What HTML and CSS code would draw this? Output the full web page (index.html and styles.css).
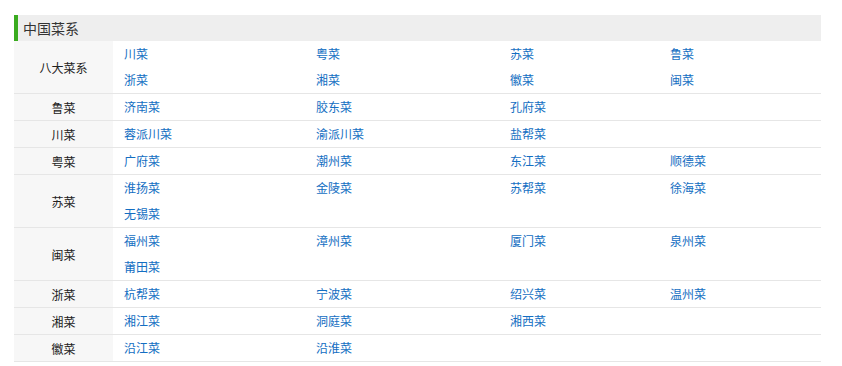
FILE: index.html
```html
<!DOCTYPE html>
<html lang="zh-CN">
<head>
<meta charset="utf-8">
<title>中国菜系</title>
<link rel="stylesheet" href="styles.css">
</head>
<body>
<div class="nav">
  <div class="nav-title">中国菜系</div>
  <div class="row">
    <div class="label">八大菜系</div>
    <div class="items">
      <a href="#">川菜</a><a href="#">粤菜</a><a href="#">苏菜</a><a href="#">鲁菜</a>
      <a href="#">浙菜</a><a href="#">湘菜</a><a href="#">徽菜</a><a href="#">闽菜</a>
    </div>
  </div>
  <div class="row">
    <div class="label">鲁菜</div>
    <div class="items"><a href="#">济南菜</a><a href="#">胶东菜</a><a href="#">孔府菜</a></div>
  </div>
  <div class="row">
    <div class="label">川菜</div>
    <div class="items"><a href="#">蓉派川菜</a><a href="#">渝派川菜</a><a href="#">盐帮菜</a></div>
  </div>
  <div class="row">
    <div class="label">粤菜</div>
    <div class="items"><a href="#">广府菜</a><a href="#">潮州菜</a><a href="#">东江菜</a><a href="#">顺德菜</a></div>
  </div>
  <div class="row">
    <div class="label">苏菜</div>
    <div class="items"><a href="#">淮扬菜</a><a href="#">金陵菜</a><a href="#">苏帮菜</a><a href="#">徐海菜</a><a href="#">无锡菜</a></div>
  </div>
  <div class="row">
    <div class="label">闽菜</div>
    <div class="items"><a href="#">福州菜</a><a href="#">漳州菜</a><a href="#">厦门菜</a><a href="#">泉州菜</a><a href="#">莆田菜</a></div>
  </div>
  <div class="row">
    <div class="label">浙菜</div>
    <div class="items"><a href="#">杭帮菜</a><a href="#">宁波菜</a><a href="#">绍兴菜</a><a href="#">温州菜</a></div>
  </div>
  <div class="row">
    <div class="label">湘菜</div>
    <div class="items"><a href="#">湘江菜</a><a href="#">洞庭菜</a><a href="#">湘西菜</a></div>
  </div>
  <div class="row">
    <div class="label">徽菜</div>
    <div class="items"><a href="#">沿江菜</a><a href="#">沿淮菜</a></div>
  </div>
</div>
</body>
</html>
```
FILE: styles.css
```css
html, body {
  margin: 0;
  padding: 0;
  background: #fff;
}
body {
  padding: 15px 21px 0 14px;
  font-family: "Noto Sans CJK SC", "Microsoft YaHei", sans-serif;
  font-size: 12px;
  color: #333;
}
.nav {
  width: 807px;
}
.nav-title {
  height: 26px;
  line-height: 26px;
  background: #eeeeee;
  border-left: 4px solid #3aab1f;
  padding-left: 5px;
  font-size: 14px;
  color: #333;
}
.row {
  display: flex;
  border-bottom: 1px solid #e6e6e6;
}
.label {
  width: 99px;
  flex: none;
  background: #f7f7f7;
  display: flex;
  align-items: center;
  justify-content: center;
  font-weight: normal;
  color: #222;
}
.items {
  flex: 1;
  display: grid;
  grid-template-columns: 192px 194px 160px 1fr;
  padding-left: 11px;
}
.items a {
  line-height: 26px;
  height: 26px;
  color: #136ec2;
  text-decoration: none;
}
```
